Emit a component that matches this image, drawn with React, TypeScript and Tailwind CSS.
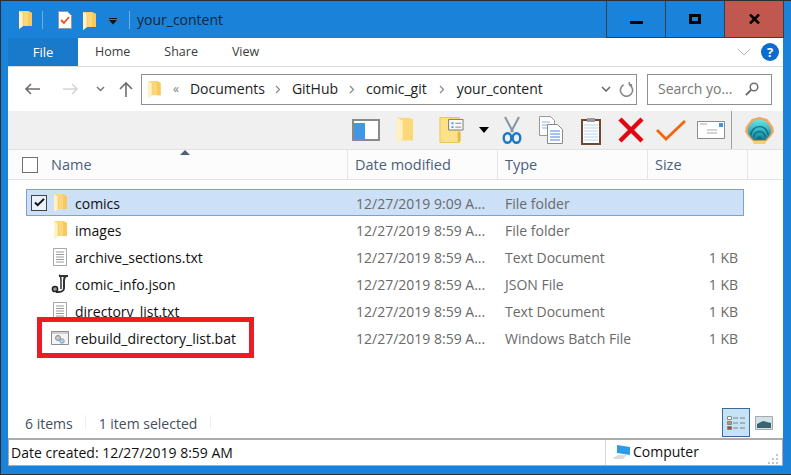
import React from "react";

const FolderUp = ({ className = "" }: { className?: string }) => (
  <svg viewBox="0 0 13 18" className={className}>
    <path d="M0 0h9l4 2v13H4l-4 3z" fill="#fbd67a" />
    <path d="M9 0l4 2v13H9z" fill="#f7c95f" />
    <path d="M0 0v18l4-3V3z" fill="#fff2c4" />
    <path d="M4 3v12" stroke="#f0c46a" strokeWidth=".6" />
  </svg>
);

const rows = [
  { name: "comics", date: "12/27/2019 9:09 A...", type: "File folder", size: "", icon: "folder" },
  { name: "images", date: "12/27/2019 8:59 A...", type: "File folder", size: "", icon: "folder" },
  { name: "archive_sections.txt", date: "12/27/2019 8:59 A...", type: "Text Document", size: "1 KB", icon: "txt" },
  { name: "comic_info.json", date: "12/27/2019 8:59 A...", type: "JSON File", size: "1 KB", icon: "json" },
  { name: "directory_list.txt", date: "12/27/2019 8:59 A...", type: "Text Document", size: "1 KB", icon: "txt" },
  { name: "rebuild_directory_list.bat", date: "12/27/2019 8:59 A...", type: "Windows Batch File", size: "1 KB", icon: "bat" },
];

const Chevron = ({ className = "" }: { className?: string }) => (
  <svg viewBox="0 0 6 9" className={className}>
    <path d="M1 1l3.500 3.500L1 8" fill="none" stroke="#888" strokeWidth="1.200" />
  </svg>
);

const RowIcon = ({ icon }: { icon: string }) => {
  if (icon === "folder") return <FolderUp className="w-[13px] h-[18px]" />;
  if (icon === "txt")
    return (
      <svg viewBox="0 0 14 18" className="w-[14px] h-[18px]">
        <path d="M.5.5h13v17H.5z" fill="#fff" stroke="#a8a8a8" />
        <path d="M3 4h8M3 6.500h8M3 9h8M3 11.500h8M3 14h8" stroke="#9a9a9a" />
      </svg>
    );
  if (icon === "json")
    return (
      <svg viewBox="0 0 18 19" className="w-[18px] h-[19px]">
        <path d="M8 2h9" stroke="#333" strokeWidth="2" />
        <path d="M8 1c2 1 2 3 2 5v9" fill="none" stroke="#333" strokeWidth="1.500" />
        <path d="M15 2c-2 1-2 3-2 5v7c0 2-2 4-5 4H5" fill="none" stroke="#333" strokeWidth="2" />
        <circle cx="4" cy="15" r="2.600" fill="#999" stroke="#222" strokeWidth="1.500" />
      </svg>
    );
  return (
    <svg viewBox="0 0 18 14" className="w-[18px] h-[14px]">
      <path d="M.5.5h17v13H.5z" fill="#f4f4f4" stroke="#8d8d8d" />
      <path d="M1 1h16v2H1z" fill="#d0d0d0" />
      <circle cx="7" cy="7" r="2.500" fill="#c9c9c9" stroke="#8a8a8a" />
      <circle cx="11" cy="10" r="2.200" fill="#b9d4ea" stroke="#7f9db5" />
    </svg>
  );
};

const App = () => {
  return (
    <div className="w-[791px] h-[475px] flex flex-col bg-[#1a82d8] border border-[#2a2f35] border-r-0 overflow-hidden text-[14px] leading-none font-['Open_Sans',sans-serif] relative">
      {/* title bar */}
      <div className="h-[37px] flex items-start pl-[18px]">
        <div className="flex items-center h-[38px] w-[587px]">
          <FolderUp className="w-[13px] h-[18px]" />
          <div className="w-px h-[18px] bg-[#6aaee6] ml-[10px] mr-[15px]" />
          <svg viewBox="0 0 14 18" className="w-[14px] h-[18px]">
            <path d="M.5.5h9l4 4v13H.5z" fill="#fff" stroke="#9a9a9a" />
            <path d="M3 9l3 3 5-6" fill="none" stroke="#e8541b" strokeWidth="1.800" />
          </svg>
          <FolderUp className="w-[13px] h-[18px] ml-[11px] mt-[1px]" />
          <svg viewBox="0 0 8 7" className="w-[8px] h-[7px] ml-[13px] mt-[2px]">
            <path d="M0 0h8v1H0zM0 2h8L4 6.500z" fill="#111" />
          </svg>
          <div className="w-px h-[18px] bg-[#6aaee6] ml-[12px] mr-[7px]" />
          <span className="text-[14px] text-[#10263c] leading-none">your_content</span>
        </div>
        <div className="flex h-[37px] border border-t-0 border-[#2e4252]">
          <div className="w-[59px] h-full flex justify-center pt-[20px] border-r border-[#2e4252]">
            <div className="w-[13px] h-[3px] bg-black" />
          </div>
          <div className="w-[59px] h-full flex justify-center pt-[13px] border-r border-[#2e4252]">
            <div className="w-[12px] h-[10px] border-[3px] border-black" />
          </div>
          <div className="w-[58px] h-full flex justify-center pt-[13px] bg-[#c0584f]">
            <svg viewBox="0 0 11 10" className="w-[11px] h-[10px]">
              <path d="M1 .500l9 9M10 .500l-9 9" stroke="#000" strokeWidth="2.500" />
            </svg>
          </div>
        </div>
      </div>

      {/* window body */}
      <div className="w-[775px] ml-[7px] bg-white flex flex-col flex-1 mb-[8px]">
        {/* tabs */}
        <div className="h-[29px] flex items-stretch border-b border-[#dadbdc] shrink-0">
          <div className="w-[70px] bg-[#1979ca] text-white text-[13px] flex items-center justify-center">File</div>
          <div className="flex items-center text-[12.500px] text-[#3b3b3b] pl-[17px] gap-[34px]">
            <span>Home</span>
            <span>Share</span>
            <span>View</span>
          </div>
          <div className="ml-auto flex items-center pr-[4px] gap-[10px]">
            <svg viewBox="0 0 14 8" className="w-[14px] h-[8px]">
              <path d="M1 1l6 6 6-6" fill="none" stroke="#b5b5b5" />
            </svg>
            <div className="w-[18px] h-[18px] rounded-full bg-[#0a6cce] text-white text-[13px] font-bold flex items-center justify-center">?</div>
          </div>
        </div>

        {/* nav */}
        <div className="h-[44px] flex items-center shrink-0 pl-[16px]">
          <svg viewBox="0 0 16 12" className="w-[16px] h-[12px]">
            <path d="M16 6H2M7 1L2 6l5 5" fill="none" stroke="#6d6d6d" strokeWidth="1.600" />
          </svg>
          <svg viewBox="0 0 16 12" className="w-[16px] h-[12px] ml-[23px]">
            <path d="M0 6h14M9 1l5 5-5 5" fill="none" stroke="#d6d6d6" strokeWidth="1.600" />
          </svg>
          <svg viewBox="0 0 9 6" className="w-[9px] h-[6px] ml-[17px]">
            <path d="M1 1l3.500 3.500L8 1" fill="none" stroke="#777" strokeWidth="1.500" />
          </svg>
          <svg viewBox="0 0 14 16" className="w-[14px] h-[16px] ml-[14px]">
            <path d="M7 16V2M1 8l6-6 6 6" fill="none" stroke="#6d6d6d" strokeWidth="1.600" />
          </svg>
          <div className="w-[496px] h-[31px] ml-[8px] border border-[#8f8f8f] flex items-center pl-[6px]">
            <FolderUp className="w-[13px] h-[17px]" />
            <span className="text-[#808080] text-[12px] ml-[12px] mr-[11px]">«</span>
            <span className="text-[14px] text-[#222]">Documents</span>
            <Chevron className="w-[6px] h-[9px] ml-[10px] mr-[11px]" />
            <span className="text-[14px] text-[#222]">GitHub</span>
            <Chevron className="w-[6px] h-[9px] mx-[11px]" />
            <span className="text-[14px] text-[#222]">comic_git</span>
            <Chevron className="w-[6px] h-[9px] mx-[12px]" />
            <span className="text-[14px] text-[#222]">your_content</span>
            <svg viewBox="0 0 10 6" className="w-[10px] h-[6px] ml-auto"><path d="M1 1l4 4 4-4" fill="none" stroke="#666" strokeWidth="1.500" /></svg>
            <svg viewBox="0 0 16 16" className="w-[15px] h-[15px] ml-[8px] mr-[2px]"><path d="M5 3a6.500 6.500 0 1 0 6 0M11 3V0M11 3h3" fill="none" stroke="#888" strokeWidth="1.700" /></svg>
          </div>
          <div className="w-[125px] h-[31px] ml-[10px] border border-[#8f8f8f] flex items-center pl-[10px]">
            <span className="text-[14px] text-[#777]">Search yo...</span>
            <svg viewBox="0 0 14 14" className="w-[14px] h-[14px] ml-auto mr-[12px]">
              <circle cx="9" cy="5" r="3.800" fill="none" stroke="#6f6f6f" strokeWidth="1.500" />
              <path d="M6 8l-5 5" stroke="#6f6f6f" strokeWidth="2" />
            </svg>
          </div>
        </div>

        {/* toolbar */}
        <div className="h-[38px] bg-[#f0f0f0] flex items-center shrink-0 pl-[344px] relative">
          <svg viewBox="0 0 28 22" className="w-[28px] h-[22px]">
            <path d="M1 1h26v20H1z" fill="#fff" stroke="#8a8a8a" strokeWidth="2" />
            <path d="M2 4h11v16H2z" fill="#3f97e6" />
          </svg>
          <svg viewBox="0 0 20 28" className="w-[19px] h-[28px] ml-[15px]">
            <path d="M2 1h13l4 2v22H6l-4 2z" fill="#fbd978" />
            <path d="M2 1v26l6-3V4z" fill="#fff1c0" />
          </svg>
          <svg viewBox="0 0 26 28" className="w-[25px] h-[28px] ml-[25px]">
            <path d="M1 1h20v26H1z" fill="#fde08a" stroke="#eac553" />
            <path d="M10 3h15v11H10z" fill="#f8f8f8" stroke="#777" />
            <path d="M13 6h2v2h-2zM13 10h2v2h-2z" fill="#3f97e6" />
            <path d="M17 7h6M17 11h6" stroke="#888" />
            <path d="M21 16v10" stroke="#e6b93a" strokeWidth="3" />
          </svg>
          <svg viewBox="0 0 10 6" className="w-[10px] h-[6px] ml-[15px]"><path d="M0 0h10L5 6z" fill="#000" /></svg>
          <svg viewBox="0 0 20 28" className="w-[20px] h-[28px] ml-[13px]">
            <path d="M3 1l8 15M17 1L9 16" stroke="#8a929c" strokeWidth="2" />
            <ellipse cx="5.500" cy="22" rx="3.800" ry="4.800" fill="none" stroke="#1a78c6" strokeWidth="2.400" />
            <ellipse cx="14.500" cy="22" rx="3.800" ry="4.800" fill="none" stroke="#1a78c6" strokeWidth="2.400" />
          </svg>
          <svg viewBox="0 0 24 28" className="w-[24px] h-[28px] ml-[17px]">
            <path d="M.5.500h11l4 4v15H.5z" fill="#fff" stroke="#9a9a9a" />
            <path d="M3 6h8M3 9h8M3 12h8" stroke="#8fb0de" />
            <path d="M8.500 8.500h10l5 5v14H8.500z" fill="#fff" stroke="#8a8a8a" />
            <path d="M11 15h10M11 18h10M11 21h10M11 24h10" stroke="#4a85d6" />
          </svg>
          <svg viewBox="0 0 20 29" className="w-[20px] h-[29px] ml-[18px]">
            <path d="M1 4h18v24H1z" fill="#fff" stroke="#6e4a32" strokeWidth="2" />
            <path d="M3 9h14M3 12h14M3 15h14M3 18h14M3 21h14M3 24h14" stroke="#b6d4ee" />
            <path d="M6 2h8v4H6z" fill="#9a9a9a" />
          </svg>
          <svg viewBox="0 0 26 26" className="w-[26px] h-[26px] ml-[17px]">
            <path d="M2 2l22 22M24 2L2 24" stroke="#e20613" strokeWidth="4.500" />
          </svg>
          <svg viewBox="0 0 30 22" className="w-[30px] h-[22px] ml-[12px]">
            <path d="M1 11l9 9L29 2" fill="none" stroke="#f2660f" strokeWidth="2.800" />
          </svg>
          <svg viewBox="0 0 28 18" className="w-[28px] h-[18px] ml-[11px]">
            <path d="M.5.500h27v17H.5z" fill="#fff" stroke="#8c8c8c" />
            <path d="M22 2h4v4h-4z" fill="#3f97e6" />
            <path d="M3 3h7M10 9h10M10 12h10" stroke="#aaa" />
          </svg>
          <div className="w-px h-[38px] bg-[#a0a0a0] ml-[6px]" />
          <svg viewBox="0 0 32 30" className="w-[31px] h-[29px] ml-[12px]">
            <defs>
              <linearGradient id="shellFill" x1="0" y1="0" x2="0" y2="1">
                <stop offset="0" stopColor="#62e6ea" />
                <stop offset="1" stopColor="#0e7f96" />
              </linearGradient>
            </defs>
            <path d="M16 1l4 1 4 1 3 4 3 4 1 5-3 5-5 5H9l-5-5-3-5 1-5 3-4 3-4 4-1z" fill="#f2a55f" />
            <path d="M16 4c7 0 12 6 12 12 0 3-3 6-6 9H10c-3-3-6-6-6-9C4 10 9 4 16 4z" fill="url(#shellFill)" />
            <path d="M7 20a9 9 0 0 1 18 0M10 22a6 6 0 0 1 12 0" fill="none" stroke="#0f6f86" strokeWidth="1.500" />
            <path d="M13 24a3 3 0 0 1 6 0z" fill="#0f6f86" />
            <path d="M9 26h14l-1 3H10z" fill="#f5d266" />
          </svg>
        </div>

        {/* column header */}
        <div className="h-[31px] bg-[#fcfcfc] border-t border-[#e2e2e2] border-b flex shrink-0 relative text-[14.500px] text-[#4c607a] ml-0">
          <div className="w-[340px] flex items-center pl-[14px] border-r border-[#e5e5e5]">
            <div className="w-[16px] h-[16px] border border-[#707070] bg-white mr-[13px]" />
            <span className="pt-[2px]">Name</span>
          </div>
          <div className="w-[150px] flex items-center pl-[7px] pt-[2px] border-r border-[#e5e5e5]">Date modified</div>
          <div className="w-[150px] flex items-center pl-[7px] pt-[2px] border-r border-[#e5e5e5]">Type</div>
          <div className="w-[100px] flex items-center pl-[7px] pt-[2px] border-r border-[#e5e5e5]">Size</div>
          <div className="absolute left-[172px] top-[0px] w-0 h-0 border-x-[5px] border-x-transparent border-b-[5px] border-b-[#4c607a]" />
        </div>

        {/* file list */}
        <div className="flex-1 pt-[9px] relative">
          {rows.map((r, i) => (
            <div
              key={r.name}
              className={
                i === 0
                  ? "h-[27px] w-[718px] ml-[18px] flex items-center bg-[#cce0f8] border border-[#7da2ce] text-[14px]"
                  : "h-[27px] w-[718px] ml-[18px] flex items-center border border-transparent text-[14px]"
              }
            >
              <div className="w-[22px] pl-[4px] flex items-center">
                {i === 0 && (
                  <div className="w-[16px] h-[16px] border border-[#444] bg-[#e8f1fc] flex items-center justify-center">
                    <svg viewBox="0 0 12 10" className="w-[11px] h-[9px]"><path d="M1 5l3 3 7-7" fill="none" stroke="#111" strokeWidth="2.200" /></svg>
                  </div>
                )}
              </div>
              <div className="w-[22px] flex justify-center">
                <RowIcon icon={r.icon} />
              </div>
              <div className="w-[285px] pl-[4px] pt-[2px] text-[#111]">{r.name}</div>
              <div className="w-[149px] pt-[2px] text-[#6a6a6a]">{r.date}</div>
              <div className="w-[150px] pt-[2px] text-[#6a6a6a]">{r.type}</div>
              <div className="w-[83px] pt-[2px] text-right text-[#6a6a6a]">{r.size}</div>
            </div>
          ))}
          <div className="absolute left-[29px] top-[137px] w-[217px] h-[41px] border-[5px] border-[#ed1c24]" />
        </div>

        {/* status */}
        <div className="h-[32px] flex items-center shrink-0 pl-[17px] text-[14px] text-[#444f5e] relative">
          <span className="pt-[3px]">6 items</span>
          <div className="w-px h-[14px] bg-[#eeeeee] ml-[12px] mr-[13px]" />
          <span className="pt-[3px]">1 item selected</span>
          <div className="w-px h-[14px] bg-[#eeeeee] ml-[13px]" />
          <div className="ml-auto flex items-center pr-[10px] pt-[1px]">
            <div className="w-[28px] h-[29px] bg-[#c5e3f5] border border-[#3a6a96] flex flex-col justify-center items-center gap-[2px]">
              <svg viewBox="0 0 18 14" className="w-[18px] h-[14px]">
                <path d="M.5.500h4v3h-4z" fill="#fff" stroke="#888" />
                <path d="M.5 5.500h4v3h-4z" fill="#b8a030" stroke="#888" />
                <path d="M.5 10.500h4v3h-4z" fill="#b04030" stroke="#888" />
                <path d="M6 2h5M13 2h5M6 7h5M13 7h5M6 12h5M13 12h5" stroke="#808080" />
              </svg>
            </div>
            <svg viewBox="0 0 18 14" className="w-[18px] h-[14px] ml-[5px]">
              <path d="M.5.500h17v13H.5z" fill="#cfe4ea" stroke="#a8a8a8" />
              <path d="M2 8l6-3 8 2v5H2z" fill="#39636f" />
            </svg>
          </div>
        </div>

        {/* details bar */}
        <div className="h-[28px] flex items-center shrink-0 border border-[#ababab] border-t-2 text-[14px] text-[#111] pl-[2px] relative">
          <span>Date created: 12/27/2019 8:59 AM</span>
          <div className="absolute left-[596px] top-0 bottom-0 w-px bg-[#d8d8d8]" />
          <div className="absolute left-[604px] top-[4px] flex items-center gap-[2px]">
            <svg viewBox="0 0 18 16" className="w-[18px] h-[16px]">
              <path d="M4 1l13 2v8L4 9z" fill="#2e9be8" />
              <path d="M0 14l5-3h9l-4 4H1z" fill="#dcdcdc" />
            </svg>
            <span>Computer</span>
          </div>
          <svg viewBox="0 0 12 12" className="absolute right-[2px] bottom-[1px] w-[12px] h-[12px]">
            <path d="M8 2h2v2H8zM4 6h2v2H4zM8 6h2v2H8zM0 10h2v2H0zM4 10h2v2H4zM8 10h2v2H8z" fill="#c4c4c4" />
          </svg>
        </div>
      </div>
    </div>
  );
};

export default App;
